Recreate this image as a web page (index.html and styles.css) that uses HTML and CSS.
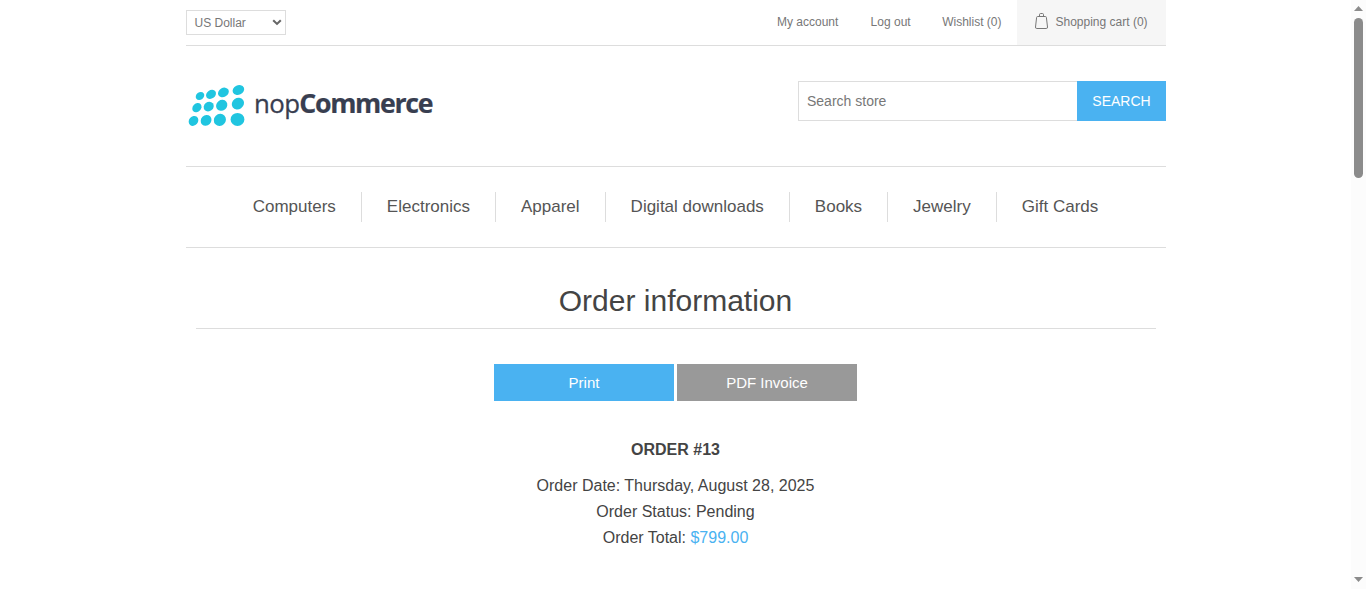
FILE: index.html
```html
<!DOCTYPE html>
<html lang="en">
<head>
<meta charset="utf-8">
<title>nopCommerce. Order information</title>
<link rel="stylesheet" href="styles.css">
</head>
<body>
<div class="viewport">
  <div class="page">
    <header>
      <div class="header-upper">
        <div class="currency">
          <span>US Dollar</span>
          <svg class="chevron" viewBox="0 0 10 7"><path d="M1.2 1.2 5 4.9 8.8 1.2" fill="none" stroke="#666" stroke-width="2.1"/></svg>
        </div>
        <nav class="header-links">
          <a class="link-account">My account</a>
          <a class="link-logout">Log out</a>
          <a class="link-wishlist">Wishlist (0)</a>
          <a class="cart">
            <svg class="bag" viewBox="0 0 14 17" fill="none" stroke="#777" stroke-width="1"><path d="M2.500 3.500Q1.700 3.500 1.600 4.500L.500 14Q.300 15.500 1.800 15.500h9.400q1.500 0 1.300-1.500L11.400 4.500Q11.300 3.500 10.500 3.500z"/><path d="M4.500 3.500V1.700Q4.500.500 5.500.500h2Q8.500.500 8.500 1.700v1.800"/></svg>
            <span>Shopping cart (0)</span>
          </a>
        </nav>
      </div>
      <div class="header-lower">
        <svg class="logo" viewBox="0 0 250 50" role="img" aria-label="nopCommerce">
          <g fill="#20c5e0">
            <ellipse cx="14" cy="15" rx="4.600" ry="3.700" transform="rotate(-38 14 15)"/>
            <ellipse cx="25" cy="13.400" rx="5.300" ry="4.200" transform="rotate(-35 25 13.400)"/>
            <ellipse cx="37.400" cy="11.400" rx="5.700" ry="4.500" transform="rotate(-30 37.400 11.400)"/>
            <ellipse cx="52.400" cy="9" rx="6" ry="4.800" transform="rotate(-25 52.400 9)"/>
            <ellipse cx="10.900" cy="26.700" rx="5.100" ry="4.100" transform="rotate(-45 10.900 26.700)"/>
            <ellipse cx="22.700" cy="25.600" rx="5.300" ry="4.600" transform="rotate(-40 22.700 25.600)"/>
            <ellipse cx="35.700" cy="24.300" rx="5.900" ry="5.200" transform="rotate(-38 35.700 24.300)"/>
            <ellipse cx="51.900" cy="22.700" rx="6.400" ry="5.600" transform="rotate(-35 51.900 22.700)"/>
            <ellipse cx="7.500" cy="39.900" rx="5.300" ry="4.500" transform="rotate(-50 7.500 39.900)"/>
            <ellipse cx="20.100" cy="39.400" rx="5.700" ry="5.100" transform="rotate(-45 20.100 39.400)"/>
            <ellipse cx="33.900" cy="38.900" rx="6.300" ry="5.800" transform="rotate(-45 33.900 38.900)"/>
            <ellipse cx="51.500" cy="38.400" rx="6.900" ry="6.500"/>
          </g>
          <text class="logo-nop" x="68.100" y="32" textLength="45.400" lengthAdjust="spacingAndGlyphs">nop</text>
          <text class="logo-commerce" x="113.200" y="32" textLength="133" lengthAdjust="spacingAndGlyphs">Commerce</text>
        </svg>
        <form class="search">
          <input class="search-text" type="text" placeholder="Search store" aria-label="Search store">
          <button class="search-button" type="button">SEARCH</button>
        </form>
      </div>
    </header>
    <nav class="menu">
      <a>Computers</a><a>Electronics</a><a>Apparel</a><a>Digital downloads</a><a>Books</a><a>Jewelry</a><a>Gift Cards</a>
    </nav>
    <main class="order">
      <h1>Order information</h1>
      <div class="actions">
        <a class="button print">Print</a>
        <a class="button pdf">PDF Invoice</a>
      </div>
      <div class="order-number">ORDER #13</div>
      <ul class="overview">
        <li>Order Date: Thursday, August 28, 2025</li>
        <li>Order Status: Pending</li>
        <li>Order Total: <span class="total">$799.00</span></li>
      </ul>
    </main>
  </div>
  <div class="scrollbar">
    <svg class="arrow" viewBox="0 0 9 5"><path d="M4.500 0 9 5H0z" fill="#8b8b8b"/></svg>
    <div class="thumb"></div>
    <svg class="arrow arrow-down" viewBox="0 0 9 5"><path d="M0 0h9L4.500 5z" fill="#8b8b8b"/></svg>
  </div>
</div>
</body>
</html>
```
FILE: styles.css
```css
* { box-sizing: border-box; margin: 0; padding: 0; }
body { font: 14px "Liberation Sans", Arial, sans-serif; color: #777; background: #fff; overflow: hidden; }
svg { display: block; }
.viewport { display: flex; height: 589px; }
.page { width: 980px; margin: 0 185.5px; flex: none; }

.header-upper { display: flex; justify-content: space-between; height: 46px; border-bottom: 1px solid #ddd; font-size: 12px; }
.currency { display: flex; align-items: center; justify-content: space-between; width: 100px; height: 25px; margin-top: 10px; padding: 0 3px 0 8px; border: 1px solid #ddd; }
.chevron { width: 10px; height: 7px; }
.header-links { display: flex; line-height: 44px; }
.link-account { margin-right: 32.3px; }
.link-logout { margin-right: 31.5px; }
.link-wishlist { margin-right: 15px; }
.cart { display: flex; width: 149px; height: 45px; padding-left: 18px; background: #f6f6f6; }
.bag { width: 14px; height: 17px; margin: 13px 7px 0 0; }

.header-lower { display: flex; justify-content: space-between; height: 120px; padding-top: 35px; }
.logo { width: 250px; height: 50px; margin-left: 0.5px; overflow: visible; }
.logo text { font-family: "Open Sans", "Noto Sans", sans-serif; font-size: 26px; fill: #383e50; }
.logo .logo-nop { stroke: #383e50; stroke-width: 0.3px; letter-spacing: -0.6px; }
.logo .logo-commerce { font-size: 26.5px; font-weight: 700; letter-spacing: -1.3px; stroke: #383e50; stroke-width: 0.2px; }
.search { display: flex; height: 40px; }
.search-text { width: 279px; height: 40px; padding: 0 8px 0 8.5px; border: 1px solid #ddd; border-right: 0; outline: 0; font: 14px "Liberation Sans", Arial, sans-serif; }
.search-text::placeholder { color: #777; }
.search-button { width: 89px; height: 40px; border: 0; padding-left: 1px; background: #4ab2f1; color: #fff; font: 14px "Liberation Sans", Arial, sans-serif; }

.menu { display: flex; justify-content: center; align-items: center; height: 82px; border: solid #ddd; border-width: 1px 0; font-size: 17px; color: #555; }
.menu a { padding: 0 25px; line-height: 30px; }
.menu a + a { border-left: 1px solid #ddd; }

.order { padding: 0 10px; text-align: center; color: #444; }
.order h1 { height: 81px; padding-top: 35px; border-bottom: 1px solid #ddd; font-size: 30px; font-weight: 400; line-height: 36px; }
.actions { display: flex; justify-content: center; gap: 3px; margin-top: 35px; }
.button { width: 180px; height: 37px; line-height: 37px; font-size: 15px; color: #fff; }
.print { background: #4ab2f1; }
.pdf { background: #999; }
.order-number { margin-top: 39px; font-size: 16px; font-weight: 700; line-height: 19px; }
.overview { margin-top: 14px; list-style: none; font-size: 16px; line-height: 26px; }
.total { color: #4ab2f1; }

.scrollbar { display: flex; flex-direction: column; align-items: center; width: 15px; height: 589px; padding: 6px 0 7px; background: #fcfcfc; }
.arrow { width: 9px; height: 5px; }
.thumb { width: 9px; height: 160px; margin-top: 7px; border-radius: 5px; background: #8b8b8b; }
.arrow-down { margin-top: auto; }
```
